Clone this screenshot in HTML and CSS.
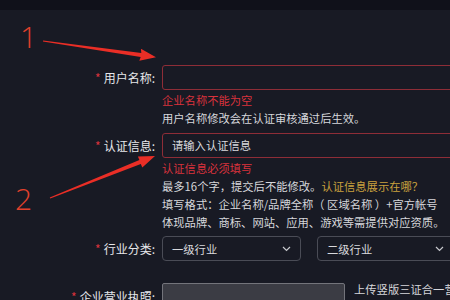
FILE: index.html
```html
<!DOCTYPE html>
<html lang="zh-CN">
<head>
<meta charset="utf-8">
<link rel="stylesheet" href="styles.css">
</head>
<body>
<div class="topbar"></div>
<div class="form">
  <div class="field f1">
    <div class="label"><span class="req">*</span>用户名称:</div>
    <div class="control">
      <div class="input error"></div>
      <div class="err">企业名称不能为空</div>
      <div class="hint">用户名称修改会在认证审核通过后生效。</div>
    </div>
  </div>
  <div class="field f2">
    <div class="label"><span class="req">*</span>认证信息:</div>
    <div class="control">
      <div class="input error"><span class="ph">请输入认证信息</span></div>
      <div class="err">认证信息必须填写</div>
      <div class="hint">最多16个字，提交后不能修改。<span class="link">认证信息展示在哪？</span></div>
      <div class="hint">填写格式：企业名称/品牌全称（ 区域名称 ）+官方帐号</div>
      <div class="hint">体现品牌、商标、网站、应用、游戏等需提供对应资质。</div>
    </div>
  </div>
  <div class="field f3">
    <div class="label"><span class="req">*</span>行业分类:</div>
    <div class="control selects">
      <div class="select s1"><span>一级行业</span><svg class="chev" width="9" height="6" viewBox="0 0 9 6"><path d="M1 1 L4.5 4.5 L8 1" fill="none" stroke="#c8c9ce" stroke-width="1.2"/></svg></div>
      <div class="select s2"><span>二级行业</span><svg class="chev" width="9" height="6" viewBox="0 0 9 6"><path d="M1 1 L4.5 4.5 L8 1" fill="none" stroke="#c8c9ce" stroke-width="1.2"/></svg></div>
    </div>
  </div>
  <div class="field f4">
    <div class="label lic"><span class="req">*</span>企业营业执照:</div>
    <div class="control upload-row">
      <div class="upload"></div>
      <div class="upload-tip">上传竖版三证合一营业执照，<br>需要加盖公章</div>
    </div>
  </div>
</div>
<span class="num n1">1</span>
<span class="num n2">2</span>
<svg class="arrows" width="450" height="300" viewBox="0 0 450 300">
  <polygon fill="#ea2e26" points="43.1,40.4 141.3,52.9 140.9,48.8 156,57.2 139.3,60.7 140.7,56.9 42.9,41.6"/>
  <polygon fill="#ea2e26" points="50.2,198.6 140.8,163.9 142.3,167.6 155,156 137.9,156.4 139.4,160.1 49.8,197.4"/>
</svg>
</body>
</html>
```
FILE: styles.css
```css
html, body {
  margin: 0;
  padding: 0;
}
body {
  width: 450px;
  height: 300px;
  overflow: hidden;
  position: relative;
  background: #181a24;
  font-family: "Noto Sans CJK SC", "Noto Sans", sans-serif;
  font-size: 11.3px;
  color: #d6d7db;
}
.topbar {
  height: 10px;
  background: #10111a;
}
.form {
  padding-top: 55px;
}
.field {
  display: flex;
  column-gap: 7px;
}
.f1 { margin-bottom: 6px; }
.f2 { margin-bottom: 5px; }
.f3 { margin-bottom: 22px; }
.label {
  width: 155px;
  flex: none;
  text-align: right;
  height: 25px;
  line-height: 25px;
  font-size: 12px;
  color: #e6e7ea;
  white-space: nowrap;
}
.label.lic {
  line-height: 28px;
}
.req {
  color: #d8323c;
  margin-right: 3px;
  font-size: 12px;
}
.control {
  width: 300px;
  flex: none;
}
.input {
  box-sizing: border-box;
  height: 25px;
  border: 1px solid #4a4c56;
  border-radius: 3px;
  padding-left: 9px;
  line-height: 23px;
}
.input.error {
  border-color: #8e2d37;
}
.ph {
  color: #d8d9dd;
}
.err {
  margin-top: 1px;
  line-height: 18px;
  height: 18px;
  color: #d8323c;
}
.hint {
  line-height: 18px;
  height: 18px;
  white-space: nowrap;
}
.link {
  color: #c9a13e;
}
.selects {
  display: flex;
  column-gap: 16px;
}
.select {
  box-sizing: border-box;
  height: 25px;
  border: 1px solid #4a4c56;
  border-radius: 4px;
  padding: 0 9px;
  display: flex;
  align-items: center;
  justify-content: space-between;
  color: #d8d9dd;
  flex: none;
}
.s1 { width: 139px; }
.s2 { width: 137px; }
.upload-row {
  display: flex;
  column-gap: 9px;
  width: 300px;
}
.upload {
  box-sizing: border-box;
  width: 183px;
  height: 60px;
  flex: none;
  background: #3b3c44;
  border: 1px solid #73747b;
  border-radius: 2px;
}
.upload-tip {
  line-height: 17px;
  margin-top: -2px;
  white-space: nowrap;
}
.num {
  position: absolute;
  font-family: "Open Sans", "DejaVu Sans", sans-serif;
  font-weight: 300;
  font-size: 30px;
  line-height: 30px;
  color: #e2412c;
}
.n1 { left: 20px; top: 22px; }
.n2 { left: 15px; top: 184px; }
.arrows {
  position: absolute;
  left: 0;
  top: 0;
  pointer-events: none;
}
```
